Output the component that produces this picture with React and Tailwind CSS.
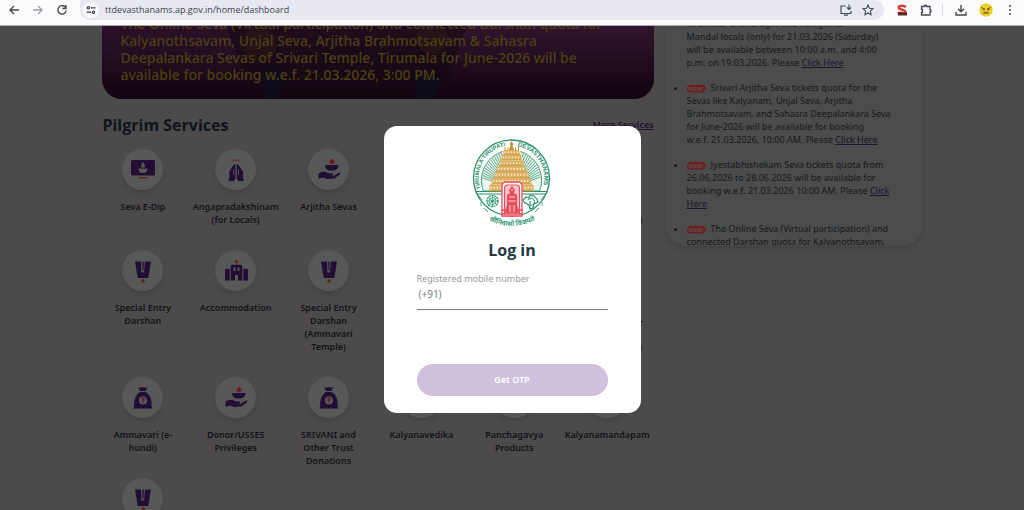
import { useState } from "react"

const services = [
  { label: "Seva E-Dip", icon: "screen" },
  { label: "Angapradakshinam\n(for Locals)", icon: "hands" },
  { label: "Arjitha Sevas", icon: "lamp" },
  { label: "Srivari Seva", icon: "hands" },
  { label: "Panchagavya", icon: "lamp" },
  { label: "Senior Citizen /\nDisabled Person\nDarshan", icon: "namam" },
  { label: "Special Entry\nDarshan", icon: "namam" },
  { label: "Accommodation", icon: "building" },
  { label: "Special Entry\nDarshan\n(Ammavari\nTemple)", icon: "namam" },
  { label: "Publications", icon: "screen" },
  { label: "Local Temple\nSevas", icon: "lamp" },
  { label: "Srivari Temple\nDarshan Quota -\nVirtual\nVaikunta Dwara\nDarshan", icon: "screen" },
  { label: "Ammavari (e-\nhundi)", icon: "bag" },
  { label: "Donor/USSES\nPrivileges", icon: "lamp" },
  { label: "SRIVANI and\nOther Trust\nDonations", icon: "bag" },
  { label: "Kalyanavedika", icon: "building" },
  { label: "Panchagavya\nProducts", icon: "lamp" },
  { label: "Kalyanamandapam", icon: "building" },
  { label: "", icon: "namam" }
]

const news = [
  {
    lines: [
      "Tirumala, Chandragiri and Renigunta",
      "Mandal locals (only) for 21.03.2026 (Saturday)",
      "will be available between 10:00 a.m. and 4:00",
      "p.m. on 19.03.2026. Please "
    ],
    link: ["Click Here"]
  },
  {
    isNew: true,
    lines: [
      "Srivari Arjitha Seva tickets quota for the",
      "Sevas like Kalyanam, Unjal Seva, Arjitha",
      "Brahmotsavam, and Sahasra Deepalankara Seva",
      "for June-2026 will be available for booking",
      "w.e.f. 21.03.2026, 10:00 AM. Please "
    ],
    link: ["Click Here"]
  },
  {
    isNew: true,
    lines: [
      "Jyestabhishekam Seva tickets quota from",
      "26.06.2026 to 28.06.2026 will be available for",
      "booking w.e.f. 21.03.2026 10:00 AM. Please "
    ],
    link: ["Click", "Here"]
  },
  {
    isNew: true,
    lines: [
      "The Online Seva (Virtual participation) and",
      "connected Darshan quota for Kalyanothsavam,"
    ]
  }
]

function ServiceIcon({ name }) {
  return (
    <svg viewBox="-12 -12 24 24" className="h-6 w-6" fill="#441c6a" aria-hidden="true">
      {name === "screen" && (
        <>
          <rect x="-12" y="-10" width="24" height="15.5" rx="1.5" />
          <path d="M-4.500-1.500h9c0 3-1.500 4.500-4.500 4.500s-4.500-1.500-4.500-4.500zM0-8c2 2.500 2.500 4 1.500 5.500h-3C-2.500-4-2-5.500 0-8z" fill="#aeb2b2" />
          <rect x="-4" y="7" width="9" height="1.500" rx=".7" fill="#d8343c" />
        </>
      )}
      {name === "hands" && (
        <>
          <path d="M-.5-6v14l-1.500 3h-5.500l1-5-.3-4C-5-2-3-5-.5-6zM.8-6v14l1.500 3h5.500l-1-5 .3-4C5-2 3-5 .8-6z" />
          <path d="M-2.200 5V-.5M2.500 5V-.5" stroke="#aeb2b2" strokeWidth=".9" />
          <path d="M-3-10.500l1 2M0-11v2.200M3-10.500l-1 2" stroke="#d8343c" strokeWidth="1.100" />
        </>
      )}
      {name === "lamp" && (
        <>
          <path d="M-4-5H9.500c0 3-1.500 5-4.500 5.500H0C-2.500-.5-4-2-4-5z" />
          <path d="M3-11.500c2.500 2.500 3.200 4 2 5.200H1C-.2-7.500.5-9 3-11.500z" fill="#d8343c" />
          <path d="M-10.500 3.500l3-1.500 4-.2 3 1.500 4 .2c1.500.5 1 2.200-.5 2.200h-3l4.500.3 5.500-3.500c1.500 0 1.500 1.200.7 2L5.500 8.500l-8 .5-3-1.500-5 1.200z" />
        </>
      )}
      {name === "namam" && (
        <>
          <path d="M-8-9.500h6L-1.600 1.500h2.600L2-9.500H8L5.300 7H-5.300z" />
          <path d="M-.7-9.500h1.500L.5-.5h-1z" />
          <circle cx="0" cy="10" r="1.700" fill="#d8343c" />
        </>
      )}
      {name === "building" && (
        <>
          <path d="M-5.300 9.500V-5l1-1.200H5.300L6.300-5V9.500H2V4H-1v5.500zM-11 9.500V-1l1-1.200h3.700V9.500zM12 9.500V-1l-1-1.200H7.300V9.500z" />
          <path d="M-2.500-3.500h2V0h-2zM1.500-3.500h2V0h-2z" fill="#aeb2b2" />
          <circle cx=".5" cy="-9.500" r="1.700" fill="#d8343c" />
        </>
      )}
      {name === "bag" && (
        <>
          <path d="M-5-11l2 .8 2.500-.8 2.500.8L4.500-11 2.500-7h-5.500zM-3-6h5.500C7-3.500 9 1 8.500 7l.8 3.500H-9.500L-8.800 7C-9 1-7-3.500-3-6z" />
          <circle cx="0" cy="2.500" r="4.100" fill="#aeb2b2" />
          <path d="M-1.800.2h3.600M-1.800 1.900h3.600M-.8.200c2.500 0 2.500 3.200-.4 3.200L1 5.200" stroke="#d8343c" strokeWidth="1" fill="none" />
        </>
      )}
    </svg>
  )
}

function NewBadge() {
  return (
    <span className="mr-1 inline-block h-2 w-5 rounded-l-sm bg-[#e03840] pl-[2px] align-middle text-[6px] font-bold leading-[8px] text-[#b0a0a0] [clip-path:polygon(0_0,82%_0,100%_50%,82%_100%,0_100%)]">
      NEW
    </span>
  )
}

function NewsItem({ item }) {
  const last = item.lines.length - 1
  const link = item.link || []
  return (
    <li>
      {item.lines.map((line, i) => (
        <span key={line}>
          {i > 0 && <br />}
          {i === 0 && item.isNew && <NewBadge />}
          {line}
          {i === last && link.length > 0 && (
            <a href="#news" className="text-[#402858] underline">
              {link[0]}
              {link[1] && <br />}
              {link[1]}
            </a>
          )}
        </span>
      ))}
    </li>
  )
}

function TempleLogo() {
  const rays = []
  for (let a = 184; a <= 356; a += 5) {
    const r = (a * Math.PI) / 180
    rays.push(`M${51.5 + 14 * Math.cos(r)} ${54 + 14 * Math.sin(r)}L${51.5 + 29 * Math.cos(r)} ${50 + 29 * Math.sin(r)}`)
  }
  const tiers = [
    [43.5, 20, 16, 4.5],
    [41.5, 25, 20, 5],
    [39.5, 30.5, 24, 5],
    [37, 36, 29, 5.500],
    [34.500, 42, 34, 5.500],
    [32, 48, 39, 6],
    [29.500, 54.500, 44, 6.500]
  ]
  return (
    <svg viewBox="10 8 84 92" className="h-[92px] w-[84px]" role="img" aria-label="Tirumala Tirupati Devasthanams">
      <defs>
        <path id="ringLeft" d="M20.700 58.500 A32.200 32.200 0 0 1 50 15.500" />
        <path id="ringRight" d="M57.500 16.300 A32.200 32.200 0 0 1 81 62" />
        <path id="motto" d="M28 90 Q51.500 102 76 90" />
      </defs>
      <circle cx="51.500" cy="48" r="38" fill="#fff" stroke="#279068" strokeWidth="1.300" />
      <path d="M23.500 61a30 30 0 1 1 56 0z" fill="#eaf5ef" stroke="#279068" strokeWidth=".9" />
      <path d={rays.join("")} stroke="#5eab8b" strokeWidth="1" />
      <g fill="#279068" fontFamily="Liberation Sans, sans-serif" fontWeight="700">
        <text fontSize="5.600"><textPath href="#ringLeft">TIRUMALA TIRUPATI</textPath></text>
        <text fontSize="6.200"><textPath href="#ringRight">DEVASTHANAMS</textPath></text>
      </g>
      <path d="M16 61.500h71M17 64h69" stroke="#279068" strokeWidth="1.200" />
      <path d="M43 20l-3 13-5 14-6 14h45l-6-14-5-14-3-13z" fill="#fff3dc" />
      {tiers.map(([x, y, w, h]) => (
        <g key={y}>
          <rect x={x} y={y} width={w} height={h} rx="1" fill="#dcb162" />
          <path d={`M${x + 1} ${y + h / 2}h${w - 2}`} stroke="#fff3d8" strokeWidth={h / 3} strokeDasharray="1.200 1.900" />
          <path d={`M${x - 1} ${y + h}h${w + 2}`} stroke="#c08c3a" strokeWidth=".7" />
        </g>
      ))}
      <path d="M51.500 11l1.800 3-.8 1.500 1.500 4.500h-5l1.500-4.500-.8-1.500z" fill="#c98f35" />
      <path d="M45 20v-3M48 20v-2.500M55.500 20v-2.500M58.500 20v-3" stroke="#c98f35" strokeWidth="1" />
      <path d="M42 86V56q0-4 4-4h12q4 0 4 4v30z" fill="#fff" stroke="#e84c5a" strokeWidth="1.300" />
      <path d="M44.500 84V58q0-3 3-3h9q3 0 3 3v26" fill="#f9c4c9" stroke="#e84c5a" strokeWidth="1.200" />
      <path d="M52 56l3 4-1 3 3 2v10l2 8H45l2-8V65l3-2-1-3z" fill="#e84c5a" />
      <path d="M49 67h6M48.500 71h7M50 75v7M54 75v7M51 60h2" stroke="#fff" strokeWidth=".8" />
      <path d="M41 80h5M58 80h5M41 84h22" stroke="#e84c5a" strokeWidth="1.500" />
      <g fill="none" stroke="#279068">
        <circle cx="32.500" cy="71" r="5.500" strokeWidth="1.300" strokeDasharray="2 .7" />
        <circle cx="32.500" cy="71" r="3.500" strokeWidth=".8" />
        <circle cx="32.500" cy="71" r="1" strokeWidth="1" />
        <path d="M32.500 65v12M26.500 71h12M28 67l9 8M37 67l-9 8" strokeWidth=".6" />
        <path d="M63 70l3-3 3 1 1-3 4 1 3 3 1 3-4 2-1 4-3 1-1-4-4-2z" strokeWidth="1.100" />
        <path d="M68 70q4-4 6 0t-4 6v-5" strokeWidth="1" />
        <path d="M19 66l3 4M84 66l-3 4M24 78l4 4M79 78l-4 4M21 72v4M82 72v4" strokeWidth=".8" />
      </g>
      <text fill="#279068" fontFamily="Noto Sans, Noto Sans Devanagari, sans-serif" fontSize="7" fontWeight="600" textAnchor="middle">
        <textPath href="#motto" startOffset="50%">श्रीनिवासो विजयते</textPath>
      </text>
    </svg>
  )
}

function BrowserBar() {
  const stroke = { fill: "none", stroke: "#474a54", strokeWidth: 1.4 }
  return (
    <header className="flex h-[26px] shrink-0 items-start border-b border-[#a9a9b0] bg-[#fbfbfe]">
      <div className="flex h-5 flex-1 items-center">
        <div className="flex w-20 items-center justify-between pl-2 pr-3">
          <button aria-label="Back" className="h-3 w-3">
            <svg viewBox="0 0 12 12" {...stroke}><path d="M11 6H2M6 2L2 6l4 4" /></svg>
          </button>
          <button aria-label="Forward" className="h-3 w-3 opacity-50">
            <svg viewBox="0 0 12 12" {...stroke}><path d="M1 6h9M6 2l4 4-4 4" /></svg>
          </button>
          <button aria-label="Reload" className="h-3 w-3">
            <svg viewBox="0 0 12 12" {...stroke}><path d="M9.800 4A4.200 4.200 0 1 0 10.200 6.500M10 1v3.500H6.500" /></svg>
          </button>
        </div>
        <div className="flex h-5 flex-1 items-center rounded-b-xl rounded-tr-xl bg-[#e7e8f2] pl-[3px] pr-[10px]">
          <button aria-label="Site information" className="flex h-4 w-4 items-center justify-center rounded-full bg-[#fbfbfe]">
            <svg viewBox="0 0 10 10" className="h-[10px] w-[10px]" fill="none" stroke="#3b3d46" strokeWidth="1.200">
              <circle cx="2.500" cy="2.800" r="1.200" /><path d="M5 2.800h4.500M.5 7.200H5" /><circle cx="7.500" cy="7.200" r="1.200" />
            </svg>
          </button>
          <input
            aria-label="Address"
            defaultValue="ttdevasthanams.ap.gov.in/home/dashboard"
            className="ml-1 min-w-0 flex-1 bg-transparent pl-[2px] font-['Open_Sans',sans-serif] text-[9px] text-[#41434c] outline-none"
          />
          <button aria-label="Install" className="mr-[10px] h-3 w-3">
            <svg viewBox="0 0 12 12" {...stroke} strokeWidth="1.200"><path d="M6 2H1v7.500h10V7M4 11.200h4M9 .5v5M7 3.500l2 2 2-2" /></svg>
          </button>
          <button aria-label="Bookmark" className="h-3 w-3">
            <svg viewBox="0 0 12 12" {...stroke} strokeWidth="1.100"><path d="M6 1l1.500 3.300 3.500.4-2.600 2.400.7 3.500L6 8.900l-3.100 1.700.7-3.500L1 4.700l3.500-.4z" /></svg>
          </button>
        </div>
      </div>
      <div className="flex h-5 w-[140px] items-center pl-3">
        <button aria-label="S extension" className="h-3 w-3">
          <svg viewBox="0 0 12 12">
            <path d="M9.800 3C8 1.200 3 1.200 2.800 3.600s6.700 1.900 6.400 4.300S4 10 2 8.300" fill="none" stroke="#dc3d30" strokeWidth="2.600" />
            <path d="M2 8l2 .5 2-1 1 1.500 4-1v3.500H2z" fill="#5a2822" />
          </svg>
        </button>
        <button aria-label="Extensions" className="ml-3 h-3 w-3">
          <svg viewBox="0 0 12 12" {...stroke} strokeWidth="1.300"><path d="M1.500 2.500h3V1.500h2v1H10v3.300h.8v2H10v3.200H1.500V8.500h1v-3h-1z" /></svg>
        </button>
        <span className="ml-[10px] h-3 w-px bg-[#d3dcee]" />
        <button aria-label="Downloads" className="ml-3 h-3 w-3">
          <svg viewBox="0 0 12 12" {...stroke}><path d="M6 1v6.500M3 4.800l3 3 3-3M1 8v3h10V8" /></svg>
        </button>
        <button aria-label="Profile" className="ml-3 h-[14px] w-[14px]">
          <svg viewBox="0 0 14 14">
            <circle cx="7" cy="7" r="6.800" fill="#ecd02e" />
            <path d="M2 4.500l4 1.500M12 4.500L8 6M3.500 6.800H6M8 6.800h2.500M4.500 10h5M4.500 10.800l1-1.600h3l1 1.600" stroke="#75621b" strokeWidth="1" fill="none" />
          </svg>
        </button>
        <button aria-label="Menu" className="ml-3 h-3 w-3">
          <svg viewBox="0 0 12 12" fill="#474a54"><circle cx="5" cy="2" r="1" /><circle cx="5" cy="6" r="1" /><circle cx="5" cy="10" r="1" /></svg>
        </button>
      </div>
    </header>
  )
}

function LoginDialog() {
  const [mobile, setMobile] = useState("")

  return (
    <div className="absolute inset-0 flex items-center justify-center bg-black/50 pt-[3px]">
      <form
        role="dialog"
        aria-labelledby="login-title"
        onSubmit={(e) => e.preventDefault()}
        className="flex w-[257px] flex-col rounded-[13px] bg-white px-[33px] pb-[17px] pt-3"
      >
        <div className="flex justify-center">
          <TempleLogo />
        </div>
        <h2 id="login-title" className="mt-2 text-center text-base font-bold leading-6 text-[#243746]">Log in</h2>
        <label htmlFor="mobile" className="mt-[10px] font-['Noto_Sans',sans-serif] text-[9px] leading-[14px] text-[#999a98]">Registered mobile number</label>
        <div className="flex h-6 items-start border-b border-[#737b86] pl-[2px] text-[10px] leading-4 text-[#6c747d]">
          <span>(+91)</span>
          <input
            id="mobile"
            type="tel"
            value={mobile}
            onChange={(e) => setMobile(e.target.value)}
            className="min-w-0 flex-1 bg-transparent pl-1 outline-none"
          />
        </div>
        <button type="submit" className="mt-[54px] h-8 rounded-full bg-[#d0c1df] font-['Noto_Sans',sans-serif] text-[9px] font-semibold text-white">
          Get OTP
        </button>
      </form>
    </div>
  )
}

export default function App() {
  return (
    <div className="flex h-screen flex-col overflow-hidden font-['Open_Sans','Noto_Sans',sans-serif]">
      <BrowserBar />

      <main className="relative min-h-0 flex-1 overflow-hidden bg-[#989494]">
        <div className="flex gap-3 pl-[10%] pr-[10%]">
          <div className="min-w-0 flex-1">
            {/* Banner */}
            <section className="relative flex h-[73px] items-end overflow-hidden rounded-b-[20px] bg-gradient-to-b from-[#642a5c] to-[#240820] pb-4 pl-[18px] pr-9">
              <svg viewBox="0 0 552 73" preserveAspectRatio="none" className="absolute inset-0 h-full w-full" aria-hidden="true">
                <ellipse cx="62" cy="0" rx="80" ry="30" fill="#421a42" opacity=".4" />
                <path d="M125 0h240l-20 60-60 13H190l-50-30z" fill="#241023" opacity=".55" />
                <circle cx="158" cy="18" r="17" fill="#5d3c28" opacity=".4" />
                <circle cx="330" cy="12" r="16" fill="#5d3c28" opacity=".4" />
                <path d="M195 0v34q35 34 75 8l20-42" fill="none" stroke="#756170" strokeWidth="2" strokeDasharray="2 4" opacity=".35" />
                <path d="M315 50h25l-8 23h-18zM160 45h22l-6 28h-14z" fill="#142142" opacity=".6" />
              </svg>
              <p className="relative font-['Noto_Sans',sans-serif] text-[14px] font-medium leading-[17px] text-[#9a7e28]">
                The Online Seva (Virtual participation) and connected Darshan quota for<br />
                Kalyanothsavam, Unjal Seva, Arjitha Brahmotsavam &amp; Sahasra<br />
                Deepalankara Sevas of Srivari Temple, Tirumala for June-2026 will be<br />
                available for booking w.e.f. 21.03.2026, 3:00 PM.
              </p>
            </section>

            {/* Pilgrim services */}
            <div className="mt-4 flex items-center justify-between">
              <h1 className="text-base font-bold leading-5 text-[#1e2a38]">Pilgrim Services</h1>
              <a href="#services" className="font-['Noto_Sans',sans-serif] text-[9px] font-semibold text-[#452668] underline">More Services</a>
            </div>
            <ul id="services" className="-ml-[6px] mt-[14px] grid grid-cols-6 gap-y-[11px] font-['Noto_Sans',sans-serif]">
              {services.map((service, i) => (
                <li key={i} className="flex flex-col items-center gap-[10px]">
                  <span className="flex h-[41px] w-[41px] items-center justify-center rounded-full bg-[#aeb2b2] shadow-md">
                    <ServiceIcon name={service.icon} />
                  </span>
                  {service.label && (
                    <a href="#services" className="whitespace-pre text-center text-[9px] font-semibold leading-[13px] text-[#242932]">
                      {service.label}
                    </a>
                  )}
                </li>
              ))}
            </ul>
          </div>

          {/* Latest updates */}
          <aside className="h-[220px] w-[256px] shrink-0 overflow-hidden rounded-b-[20px] bg-[#969896] pl-[21px] font-['Noto_Sans',sans-serif] text-[9px] leading-[13px] text-[#2e343d] shadow-md">
            <ul id="news" className="-mt-[9px] flex list-disc flex-col gap-3 whitespace-nowrap">
              {news.map((item) => (
                <NewsItem key={item.lines[0]} item={item} />
              ))}
            </ul>
          </aside>
        </div>

        <LoginDialog />
      </main>
    </div>
  )
}
